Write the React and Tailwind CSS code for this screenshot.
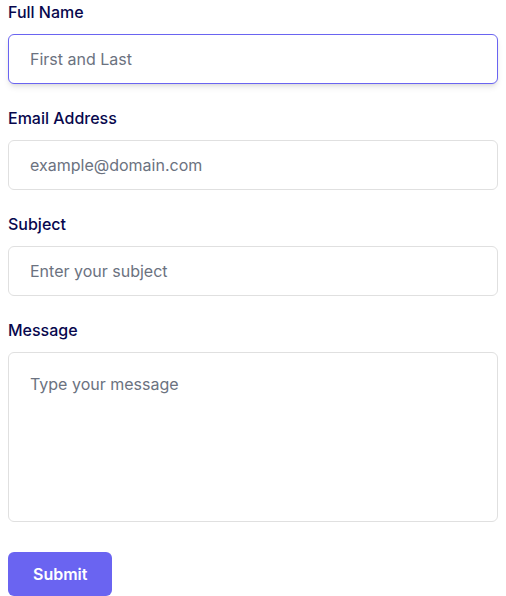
export default function App() {
  const font = { fontFamily: "Inter, 'Noto Sans', sans-serif" };
  const label = "block mb-[10px] text-base leading-6 font-medium text-[#07074D]";
  const input =
    "w-full rounded-md border border-[#e0e0e0] bg-white py-3 px-[21px] text-base leading-6 font-normal text-[#6B7280] placeholder:text-[#6B7280] outline-none";
  return (
    <div className="px-2 bg-white min-h-screen" style={font}>
      <form onSubmit={(e) => e.preventDefault()}>
        <div className="mb-[22px]">
          <label className={label}>Full Name</label>
          <input
            type="text"
            placeholder="First and Last"
            className="w-full rounded-md border border-[#6A64F1] bg-white py-3 px-[21px] text-base leading-6 font-normal text-[#6B7280] placeholder:text-[#6B7280] outline-none shadow-md"
          />
        </div>
        <div className="mb-[22px]">
          <label className={label}>Email Address</label>
          <input type="email" placeholder="example@domain.com" className={input} />
        </div>
        <div className="mb-[22px]">
          <label className={label}>Subject</label>
          <input type="text" placeholder="Enter your subject" className={input} />
        </div>
        <div className="mb-[30px]">
          <label className={label}>Message</label>
          <textarea
            rows={6}
            placeholder="Type your message"
            className="block h-[170px] w-full resize-none rounded-md border border-[#e0e0e0] bg-white pt-[19px] pb-3 px-[21px] text-base leading-6 font-normal text-[#6B7280] placeholder:text-[#6B7280] outline-none"
          />
        </div>
        <div>
          <button className="rounded-md bg-[#6A64F1] py-2.5 px-[25px] text-base leading-6 font-semibold text-white outline-none">
            Submit
          </button>
        </div>
      </form>
    </div>
  );
}
